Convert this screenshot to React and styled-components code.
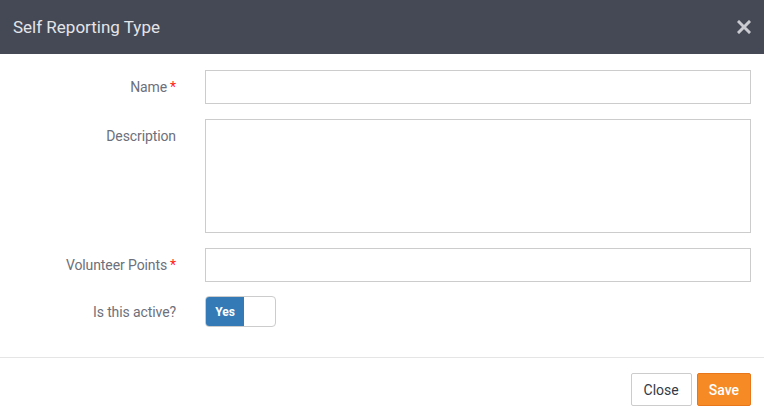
import React from 'react'
import styled, { createGlobalStyle } from 'styled-components'

const GlobalStyle = createGlobalStyle`
  html, body {
    margin: 0;
    padding: 0;
    background: #ffffff;
  }
  body {
    font-family: Roboto, "Liberation Sans", sans-serif;
  }
  * {
    box-sizing: border-box;
  }
`

const Modal = styled.div`
  width: 764px;
  min-height: 420px;
  background: #fff;
  display: flex;
  flex-direction: column;
`

const Header = styled.div`
  flex-shrink: 0;
  height: 54px;
  background: #454955;
  display: flex;
  align-items: center;
  justify-content: space-between;
  padding: 0 13px 0 13px;
`

const Title = styled.h4`
  margin: 0;
  font-size: 17px;
  font-weight: 400;
  color: #e3e4e8;
  letter-spacing: 0px;
`

const CloseX = styled.button`
  border: none;
  background: transparent;
  padding: 0;
  width: 14px;
  height: 14px;
  display: flex;
  cursor: pointer;
`

const Body = styled.div`
  padding: 16px 13px 30px 0;
  display: grid;
  grid-template-columns: 176px 1fr;
  column-gap: 29px;
  row-gap: 15px;
  border-bottom: 1px solid #e5e5e5;
`

const Label = styled.label`
  text-align: right;
  font-size: 14px;
  color: #6d707a;
  align-self: ${p => (p.top ? 'start' : 'center')};
  padding-top: ${p => (p.top ? '9px' : '0')};
  letter-spacing: -0.1px;
`

const Star = styled.span`
  color: #ff1a1a;
  margin-left: 3px;
`

const Input = styled.input`
  height: 34px;
  width: 100%;
  border: 1px solid #cccccc;
  background: #fff;
  padding: 6px 12px;
  font: inherit;
  outline: none;
`

const TextArea = styled.textarea`
  height: 114px;
  width: 100%;
  border: 1px solid #cccccc;
  background: #fff;
  padding: 6px 12px;
  font: inherit;
  resize: none;
  outline: none;
`

const Toggle = styled.div`
  width: 71px;
  height: 31px;
  border: 1px solid #cccccc;
  border-radius: 4px;
  overflow: hidden;
  display: flex;
  margin-top: -1px;
`

const ToggleOn = styled.span`
  width: 38px;
  background: #337ab7;
  color: #fff;
  font-size: 12px;
  font-weight: 700;
  display: flex;
  align-items: center;
  justify-content: center;
`

const Footer = styled.div`
  display: flex;
  justify-content: flex-end;
  gap: 5px;
  padding: 15px 13px;
`

const Button = styled.button`
  height: 33px;
  padding: 0 ${p => (p.primary ? '11px' : '12px')};
  font-family: inherit;
  font-size: 14px;
  border-radius: 2px;
  border: 1px solid ${p => (p.primary ? '#e8761a' : '#cccccc')};
  background: ${p => (p.primary ? '#f68b26' : '#ffffff')};
  color: ${p => (p.primary ? '#ffffff' : '#333a45')};
  font-weight: ${p => (p.primary ? 500 : 400)};
  cursor: pointer;
`

export default function App() {
  return (
    <>
      <GlobalStyle />
      <Modal>
        <Header>
          <Title>Self Reporting Type</Title>
          <CloseX aria-label="close">
            <svg width="14" height="14" viewBox="0 0 14 14">
              <path d="M2 2 L12 12 M12 2 L2 12" stroke="#c9cbd0" strokeWidth="3" strokeLinecap="square" />
            </svg>
          </CloseX>
        </Header>
        <Body>
          <Label>Name<Star>*</Star></Label>
          <Input />
          <Label top>Description</Label>
          <TextArea />
          <Label>Volunteer Points<Star>*</Star></Label>
          <Input />
          <Label style={{ marginTop: '-1px' }}>Is this active?</Label>
          <Toggle>
            <ToggleOn>Yes</ToggleOn>
          </Toggle>
        </Body>
        <Footer>
          <Button>Close</Button>
          <Button primary>Save</Button>
        </Footer>
      </Modal>
    </>
  )
}
